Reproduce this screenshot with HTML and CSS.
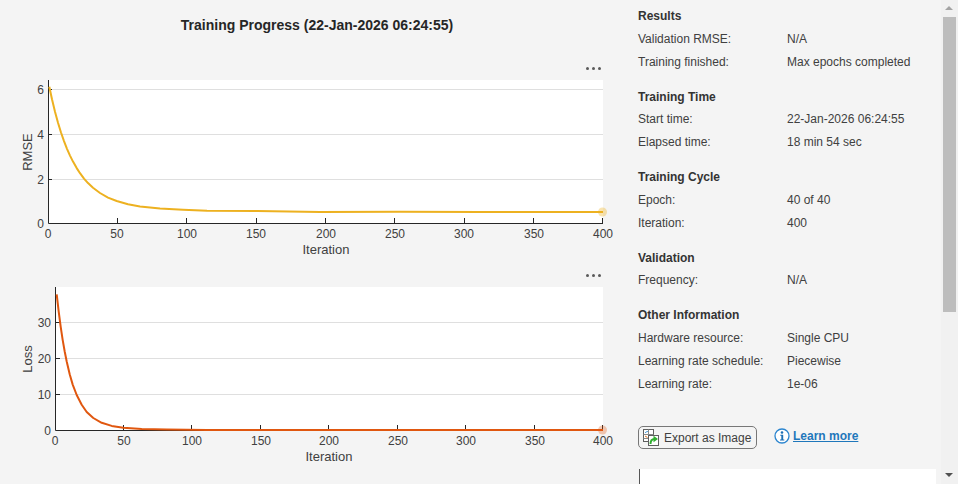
FILE: index.html
```html
<!DOCTYPE html>
<html lang="en">
<head>
    <meta charset="UTF-8">
    <title>Training Progress</title>
    <link rel="stylesheet" href="styles.css">
</head>
<body>
    <div class="app">
        <!-- Plots -->
        <main class="plots">
            <h1 class="plots-title">Training Progress (22-Jan-2026 06:24:55)</h1>

            <div class="plot-dots"><span></span><span></span><span></span></div>
            <svg class="plot" width="630" height="177" viewBox="0 0 630 177">
                <rect x="48" y="0" width="555" height="143" fill="#fff"/>
                <path class="grid" d="M48 9.5H603M48 54.5H603M48 99.5H603"/>
                <path class="axis" d="M48.5 0V143.5H603M48 9.5H52M48 54.5H52M48 99.5H52M117.5 143V138M186.500 143V138M256.500 143V138M325.500 143V138M394.500 143V138M464.500 143V138M533.500 143V138M602.500 143V138"/>
                <circle class="end-rmse" cx="602.500" cy="132" r="4.500"/>
                <path class="curve-rmse" d="M49.300 6.700 L52 19.200 L55 31.700 L58 42.700 L61 52.500 L64 61.100 L67 68.800 L70 75.600 L73 81.600 L76.700 88.100 L80 93.200 L84 98.600 L88 103.100 L93 107.800 L100 113 L108 117.600 L116.700 121 L128 124.200 L140 126.400 L160 128.400 L183 129.800 L207 130.800 L257 131 L320 132 L400 131.800 L480 132 L603 132"/>
                <g class="ticks">
                    <text x="44" y="14" text-anchor="end">6</text>
                    <text x="44" y="59" text-anchor="end">4</text>
                    <text x="44" y="104" text-anchor="end">2</text>
                    <text x="44" y="148" text-anchor="end">0</text>
                    <text x="48" y="158" text-anchor="middle">0</text>
                    <text x="117" y="158" text-anchor="middle">50</text>
                    <text x="187" y="158" text-anchor="middle">100</text>
                    <text x="256" y="158" text-anchor="middle">150</text>
                    <text x="326" y="158" text-anchor="middle">200</text>
                    <text x="395" y="158" text-anchor="middle">250</text>
                    <text x="464" y="158" text-anchor="middle">300</text>
                    <text x="534" y="158" text-anchor="middle">350</text>
                    <text x="603" y="158" text-anchor="middle">400</text>
                </g>
                <text class="label" x="326" y="174" text-anchor="middle">Iteration</text>
                <text class="label" transform="translate(32 72) rotate(-90)" text-anchor="middle">RMSE</text>
            </svg>

            <div class="plot-dots"><span></span><span></span><span></span></div>
            <svg class="plot" width="630" height="177" viewBox="0 0 630 177">
                <rect x="55" y="0" width="548" height="143" fill="#fff"/>
                <path class="grid" d="M55 35.500H603M55 71.500H603M55 107.500H603"/>
                <path class="axis" d="M55.500 0V143.500H603M55 35.500H60M55 71.500H60M55 107.500H60M123.500 143V138M191.500 143V138M260.500 143V138M328.500 143V138M397.500 143V138M465.500 143V138M534.500 143V138M602.500 143V138"/>
                <circle class="end-loss" cx="602.500" cy="143" r="4.500"/>
                <path class="curve-loss" d="M56.700 7.300 L58.700 24.700 L60.700 39.900 L62.700 53.100 L64.700 64.500 L66.700 74.500 L69.700 87.200 L72.700 97.600 L76.700 108 L81.700 117.700 L86.700 125 L93.300 131 L101.700 135.800 L111.700 138.900 L123.300 140.800 L141.700 142 L166.700 142.600 L206.700 143 L603 143"/>
                <g class="ticks">
                    <text x="51" y="40" text-anchor="end">30</text>
                    <text x="51" y="76" text-anchor="end">20</text>
                    <text x="51" y="112" text-anchor="end">10</text>
                    <text x="51" y="148" text-anchor="end">0</text>
                    <text x="55" y="158" text-anchor="middle">0</text>
                    <text x="124" y="158" text-anchor="middle">50</text>
                    <text x="192" y="158" text-anchor="middle">100</text>
                    <text x="261" y="158" text-anchor="middle">150</text>
                    <text x="329" y="158" text-anchor="middle">200</text>
                    <text x="398" y="158" text-anchor="middle">250</text>
                    <text x="466" y="158" text-anchor="middle">300</text>
                    <text x="535" y="158" text-anchor="middle">350</text>
                    <text x="603" y="158" text-anchor="middle">400</text>
                </g>
                <text class="label" x="329" y="174" text-anchor="middle">Iteration</text>
                <text class="label" transform="translate(32 72) rotate(-90)" text-anchor="middle">Loss</text>
            </svg>
        </main>

        <!-- Info panel -->
        <aside class="info">
            <section class="info-group">
                <h2>Results</h2>
                <dl>
                    <dt>Validation RMSE:</dt><dd>N/A</dd>
                    <dt>Training finished:</dt><dd>Max epochs completed</dd>
                </dl>
            </section>
            <section class="info-group">
                <h2>Training Time</h2>
                <dl>
                    <dt>Start time:</dt><dd>22-Jan-2026 06:24:55</dd>
                    <dt>Elapsed time:</dt><dd>18 min 54 sec</dd>
                </dl>
            </section>
            <section class="info-group">
                <h2>Training Cycle</h2>
                <dl>
                    <dt>Epoch:</dt><dd>40 of 40</dd>
                    <dt>Iteration:</dt><dd>400</dd>
                </dl>
            </section>
            <section class="info-group">
                <h2>Validation</h2>
                <dl>
                    <dt>Frequency:</dt><dd>N/A</dd>
                </dl>
            </section>
            <section class="info-group">
                <h2>Other Information</h2>
                <dl>
                    <dt>Hardware resource:</dt><dd>Single CPU</dd>
                    <dt>Learning rate schedule:</dt><dd>Piecewise</dd>
                    <dt>Learning rate:</dt><dd>1e-06</dd>
                </dl>
            </section>

            <div class="info-actions">
                <button class="export-btn">
                    <svg width="16" height="17" viewBox="0 0 16 17">
                        <rect x="0.500" y="0.500" width="10" height="12" fill="#fff" stroke="#5f5f5f"/>
                        <path d="M5.500 0.500V5.500M0.500 5.500H10.500M0.500 9.500H5.500" stroke="#8a8a8a" fill="none"/>
                        <path d="M2 4C3 2.800 4 2.500 5 2.500" stroke="#2f8fd8" fill="none"/>
                        <path d="M2 7L4.500 8.500" stroke="#e0701e" fill="none"/>
                        <rect x="5.500" y="6.500" width="10" height="10" fill="#fff" stroke="#5f5f5f"/>
                        <path d="M7.500 15C7.500 11.500 9 10 11.500 10" stroke="#2fae2f" stroke-width="2" fill="none"/>
                        <path d="M10.500 6.800L15 10L10.500 13.200Z" fill="#2fae2f"/>
                    </svg>
                    Export as Image
                </button>
                <svg class="info-icon" width="16" height="16" viewBox="0 0 16 16">
                    <circle cx="8" cy="8" r="7" fill="#fff" stroke="#2b85cf" stroke-width="1.300"/>
                    <circle cx="8" cy="4.500" r="1.300" fill="#1c6fb5"/>
                    <path d="M6.300 6.800H9.200V11.500H10.300V12.500H6V11.500H7.300V7.800H6.300Z" fill="#1c6fb5"/>
                </svg>
                <a class="learn-more" href="#">Learn more</a>
            </div>

            <div class="info-log"></div>
        </aside>

        <!-- Scrollbar -->
        <div class="scrollbar">
            <div class="scroll-up"></div>
            <div class="scroll-track"><div class="scroll-thumb"></div></div>
            <div class="scroll-down"></div>
        </div>
    </div>
</body>
</html>
```

FILE: styles.css
```css
/* Page */
body {
    margin: 0;
    background: #f4f4f4;
    font-family: "Liberation Sans", Arial, sans-serif;
    color: #333;
    overflow: hidden;
}

.app {
    display: flex;
    height: 484px;
    overflow: hidden;
}

/* Plots column */
.plots {
    width: 638px;
    flex: none;
}

.plots-title {
    margin: 17px 0 0;
    height: 45px;
    line-height: 17px;
    width: 634px;
    text-align: center;
    font-size: 14px;
    font-weight: bold;
    color: #262626;
}

.plot-dots {
    display: flex;
    justify-content: flex-end;
    align-items: flex-start;
    gap: 3px;
    width: 601px;
    height: 13px;
    padding-top: 5px;
}

.plot-dots span {
    width: 3px;
    height: 3px;
    border-radius: 50%;
    background: #5a5a5a;
}

.plot {
    display: block;
    margin-bottom: 12px;
}

.grid {
    stroke: #dfdfdf;
    stroke-width: 1;
    fill: none;
}

.axis {
    stroke: #262626;
    stroke-width: 1;
    fill: none;
}

.curve-rmse {
    stroke: #edb120;
    stroke-width: 2;
    stroke-linejoin: round;
    fill: none;
}

.curve-loss {
    stroke: #e0570f;
    stroke-width: 2;
    stroke-linejoin: round;
    fill: none;
}

.end-rmse {
    fill: #edb120;
    opacity: 0.35;
}

.end-loss {
    fill: #e0570f;
    opacity: 0.3;
}

.ticks text {
    font-size: 12px;
    fill: #404040;
}

.label {
    font-size: 13px;
    fill: #404040;
}

/* Info panel */
.info {
    width: 303px;
    flex: none;
    font-size: 12px;
    color: #404040;
}

.info-group {
    padding-top: 8px;
    margin-bottom: 7.5px;
}

.info-group h2 {
    margin: 0 0 3px;
    font-size: 12px;
    line-height: 16px;
    font-weight: bold;
    color: #333;
}

.info-group dl {
    display: grid;
    grid-template-columns: 149px 1fr;
    grid-auto-rows: 23px;
    align-items: center;
    margin: 0;
}

.info-group dd {
    margin: 0;
}

.info-actions {
    display: flex;
    align-items: center;
    margin-top: 31px;
}

.export-btn {
    display: flex;
    align-items: center;
    gap: 5px;
    width: 119px;
    height: 23px;
    padding: 0 4px;
    background: #f4f4f4;
    border: 1px solid #777;
    border-radius: 5px;
    font-family: inherit;
    font-size: 12px;
    color: #404040;
    margin-right: 17px;
}

.info-icon {
    margin-right: 3px;
    margin-bottom: 3px;
}

.learn-more {
    margin-bottom: 3px;
    font-size: 12px;
    font-weight: bold;
    color: #1f77bb;
}

.info-log {
    margin-top: 20px;
    margin-left: 1px;
    width: 296px;
    height: 40px;
    background: #fff;
    border-left: 1px solid #555;
}

/* Scrollbar */
.scrollbar {
    width: 17px;
    flex: none;
    display: flex;
    flex-direction: column;
    background: #f1f1f1;
}

.scroll-up,
.scroll-down {
    height: 17px;
    flex: none;
    position: relative;
}

.scroll-up::after,
.scroll-down::after {
    content: "";
    position: absolute;
    left: 4px;
    top: 6px;
    border-left: 4px solid transparent;
    border-right: 4px solid transparent;
}

.scroll-up::after {
    border-bottom: 4px solid #a3a3a3;
}

.scroll-down::after {
    border-top: 4px solid #505050;
}

.scroll-track {
    flex: 1;
}

.scroll-thumb {
    height: 295px;
    margin: 0 2px;
    background: #bdbdbd;
}
```
